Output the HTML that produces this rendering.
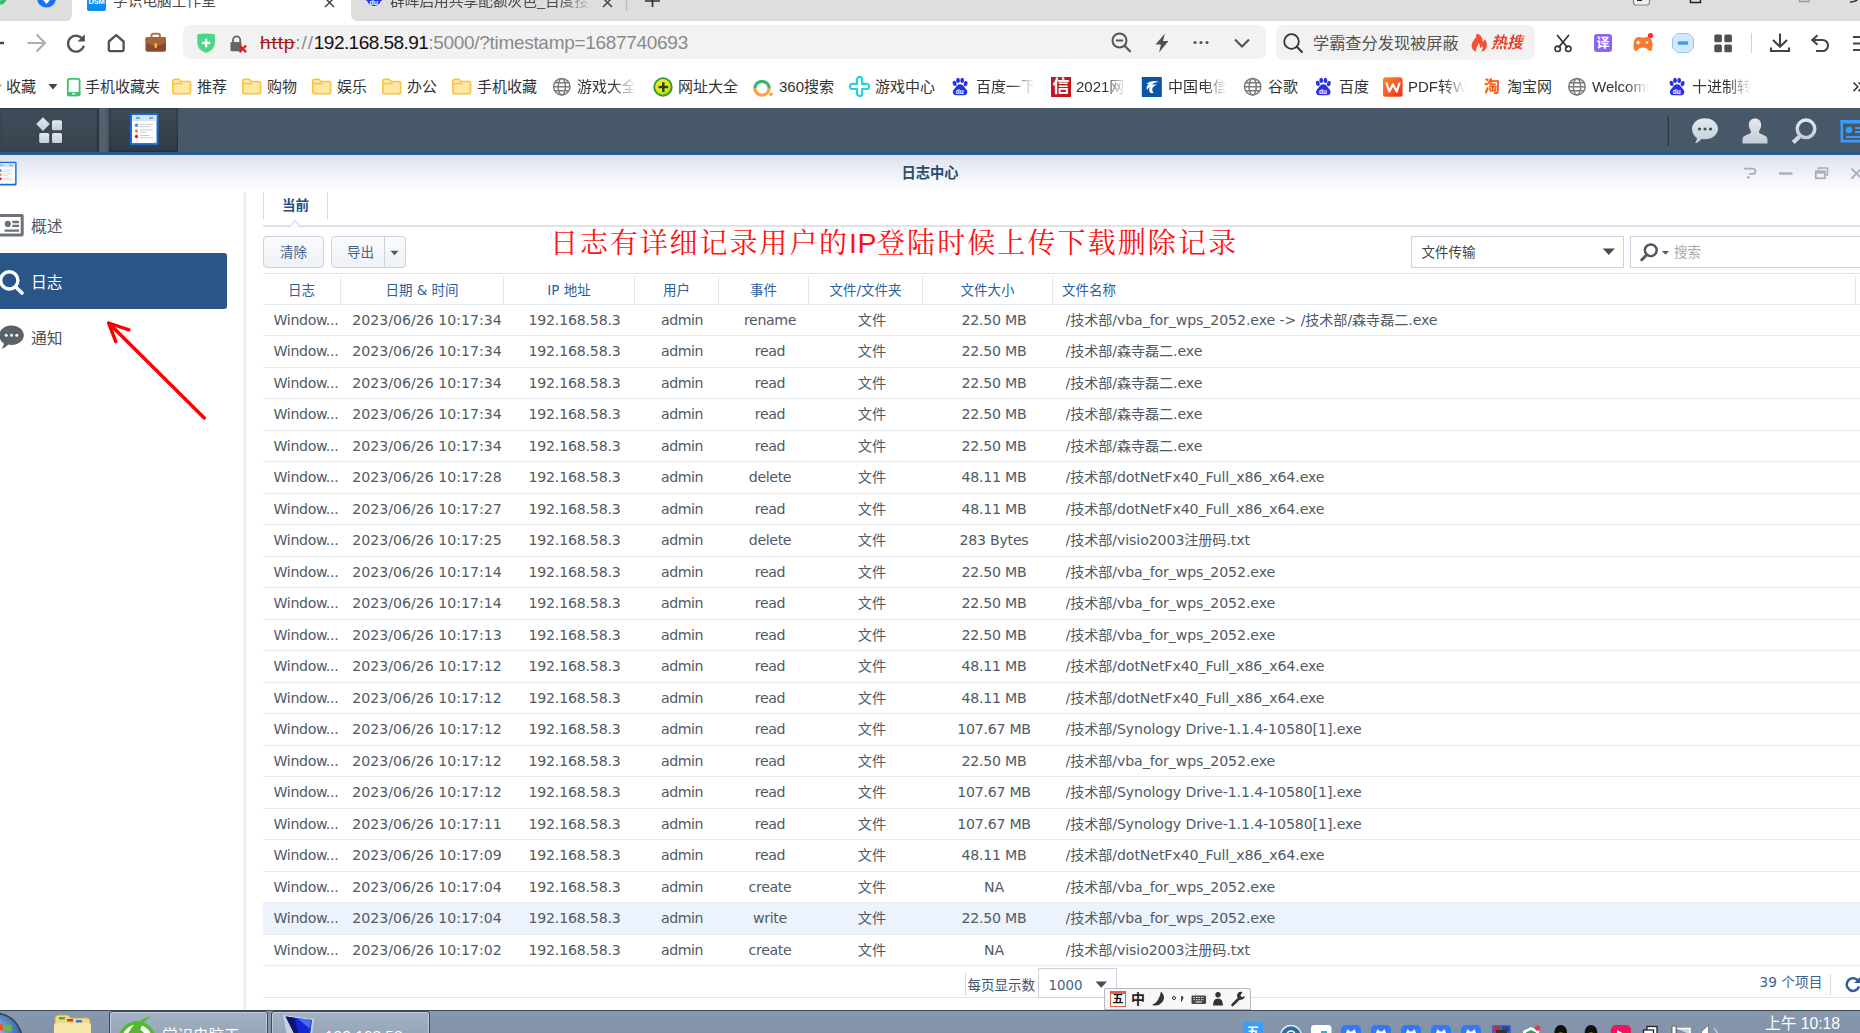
<!DOCTYPE html>
<html lang="zh-CN">
<head>
<meta charset="utf-8">
<title>日志中心</title>
<style>
*{box-sizing:border-box;margin:0;padding:0}
html,body{width:1860px;height:1033px;overflow:hidden;background:#fff}
body{position:relative;font-family:"DejaVu Sans","Noto Sans CJK SC",sans-serif;color:#505a64}
.abs{position:absolute}
svg{position:absolute;overflow:visible}
/* ---------- browser chrome ---------- */
#tabstrip{left:0;top:0;width:1860px;height:21px;background:#dedede}
.bkf{-webkit-mask-image:linear-gradient(90deg,#000 85%,transparent 100%);mask-image:linear-gradient(90deg,#000 85%,transparent 100%)}
.tab{position:absolute;top:-14px;height:35px;background:#e7e7e7;border-radius:8px 8px 0 0}
.tab.act{background:#fff}
.tabtxt{position:absolute;top:-9px;font:14.7px/20px "Liberation Sans","Noto Sans CJK SC",sans-serif;color:#4a4a4a;white-space:nowrap}
#toolbar{left:0;top:21px;width:1860px;height:44px;background:#fff}
#addr{left:183px;top:25px;width:1083px;height:35px;height:34px;background:#f2f2f2;border-radius:7px}
#url{left:260px;top:30px;font:19px/26px "Liberation Sans",sans-serif;color:#8a8a8a;white-space:nowrap;letter-spacing:-0.3px}
#url b{font-weight:normal;color:#111;letter-spacing:-.55px}
#url s{color:#a01818;letter-spacing:.9px}
#url u{text-decoration:none;letter-spacing:.9px}
#srch{left:1276px;top:25px;width:259px;height:35px;background:#f2f2f2;border-radius:7px}
#srchtxt{left:1313px;top:32px;font:16.2px/22px "Liberation Sans","Noto Sans CJK SC",sans-serif;color:#555;white-space:nowrap}
#hot{left:1491px;-webkit-mask-image:linear-gradient(90deg,#000 85%,transparent 100%);mask-image:linear-gradient(90deg,#000 85%,transparent 100%);width:35px;overflow:hidden;top:32px;font:italic bold 16px/22px "Liberation Sans","Noto Sans CJK SC",sans-serif;color:#e8432e;white-space:nowrap}
#bm{left:0;top:65px;width:1860px;height:43px;background:#fff}
.bk{position:absolute;top:75.6px;font:15px/22px "Liberation Sans","Noto Sans CJK SC",sans-serif;color:#333;white-space:nowrap;overflow:hidden}
.bk.f{-webkit-mask-image:linear-gradient(90deg,#000 60%,transparent 100%);mask-image:linear-gradient(90deg,#000 60%,transparent 100%)}
/* ---------- DSM ---------- */
#dsmbar{left:0;top:108px;width:1860px;height:44px;background:#475968}
#dsmline{left:0;top:152px;width:1860px;height:3px;background:#2a5a94}
#wtitle{left:0;top:155px;width:1860px;height:38px;background:linear-gradient(#dde3ee 0,#e6eaf3 25%,#f7f8fb 70%,#fff 100%)}
#wtxt{left:0;top:163px;width:1860px;text-align:center;font:bold 14.3px/20px "DejaVu Sans","Noto Sans CJK SC",sans-serif;color:#2c4a6e}
#side{left:0;top:192px;width:244px;height:818px;background:#fff}
#sidediv{left:242.5px;top:192px;width:3px;height:818px;background:linear-gradient(90deg,#fff,#e3e5e8 60%,#f4f5f6)}
.nav{position:absolute;left:0;width:227px;height:56px;font:15.8px/59px "DejaVu Sans","Noto Sans CJK SC",sans-serif;color:#4a5560;padding-left:31px}
.nav.sel{background:#2a5588;color:#fff;border-radius:0 3px 3px 0}
/* tabs */
#tab1{left:263px;top:192px;width:65px;height:27px;border-left:1px solid #d5dbe3;border-right:1px solid #d5dbe3;text-align:center;font:bold 13.5px/27px "DejaVu Sans","Noto Sans CJK SC",sans-serif;color:#27507f}
#tabline{left:263px;top:225px;width:1597px;height:2px;background:#e1e3e6}
/* toolbar */
.btn{position:absolute;top:236px;height:32px;border:1px solid #c9d2de;border-radius:4px;background:linear-gradient(#fafbfd,#eef1f6);font:13.5px/30px "DejaVu Sans","Noto Sans CJK SC",sans-serif;color:#3f6290;text-align:center}
#note{left:550px;top:223.3px;font:28px/40px "Liberation Serif","Noto Serif CJK SC",serif;color:#f11;white-space:nowrap;letter-spacing:1.9px}
#note i{font:normal 28.5px/40px "Liberation Sans",sans-serif;letter-spacing:.5px}
#note em{font-style:normal;letter-spacing:2.1px}
.field{position:absolute;top:236px;height:32px;border:1px solid #c9d2de;background:#fff;font:13.5px/31.5px "DejaVu Sans","Noto Sans CJK SC",sans-serif;color:#444}
/* grid */
#ghead{left:263px;top:273px;width:1597px;height:32px;border-top:1px solid #dfe4ea;border-bottom:1px solid #e3e8ee;background:#fff}
.h{position:absolute;top:2px;height:29px;font:13.5px/29px "DejaVu Sans","Noto Sans CJK SC",sans-serif;color:#2b609d;text-align:center;border-right:1px solid #e3e8ee;white-space:nowrap}
#gbody{left:263px;top:304.5px;width:1597px}
.row{position:relative;height:31.5px;width:1597px;border-bottom:1px solid #e9edf2;font:14.15px/31.5px "DejaVu Sans","Noto Sans CJK SC",sans-serif;color:#505a64;white-space:nowrap}
.row.hov{background:#edf3fd}
.c{position:absolute;top:0;text-align:center;overflow:hidden;height:30px}
.c1{left:0;width:77px;text-align:left;padding-left:10.5px;letter-spacing:-.35px}
.c2{left:82px;width:164px}
.c3{left:246.5px;width:130px;letter-spacing:-.2px}
.c4{left:377px;width:84px;letter-spacing:-.45px}
.c5{left:455px;width:104px;letter-spacing:-.35px}
.c6{left:559px;width:100px}
.c7{left:666px;width:130px;letter-spacing:-.25px}
.c8{left:802.5px;width:780px;text-align:left;letter-spacing:-.1px}
#gfoot{left:263px;top:997px;width:1597px;height:1px;background:#dfe4ea}
.ft{position:absolute;font:13.5px/20px "DejaVu Sans","Noto Sans CJK SC",sans-serif;color:#3f6290;white-space:nowrap}
/* win taskbar */
#wtask{left:0;top:1009.5px;width:1860px;height:24px;background:linear-gradient(#8797ae,#8192a9);border-top:1.5px solid #3f4a58}
.tb{position:absolute;top:1010.5px;height:30px;border:1px solid #3f4a58;border-radius:3px;background:linear-gradient(#a3b1c3,#93a3b7);box-shadow:inset 0 0 0 1px rgba(255,255,255,.35)}
.tbt{position:absolute;top:1026px;font:15.5px/20px "Liberation Sans","Noto Sans CJK SC",sans-serif;color:#fff;white-space:nowrap}
#clock{left:1765px;top:1014px;font:15.7px/20px "Liberation Sans","Noto Sans CJK SC",sans-serif;color:#fff;white-space:nowrap}
#ime{left:1104px;top:988px;width:147px;height:22px;background:#f7f7f7;border:1px solid #b5b8bd;border-radius:2px 2px 0 0}
</style>
</head>
<body>
<!-- browser tab strip -->
<div id="tabstrip" class="abs"></div>
<div class="tab act" style="left:72px;width:279px"></div>
<div class="abs" style="left:62px;top:10px;width:10px;height:11px;background:#fff"></div>
<div class="abs" style="left:62px;top:0;width:10px;height:21px;background:#dedede;border-radius:0 0 6px 0"></div>
<div class="abs" style="left:351px;top:10px;width:10px;height:11px;background:#fff"></div>
<div class="abs" style="left:351px;top:0;width:10px;height:21px;background:#dedede;border-radius:0 0 0 6px"></div>
<div class="tabtxt" style="left:113px">学识电脑工作室</div>
<div class="tabtxt bkf" style="left:390px;width:202px;overflow:hidden">群晖启用共享配额灰色_百度搜</div>
<div id="toolbar" class="abs"></div>
<div id="addr" class="abs"></div>
<div id="url" class="abs"><s>http</s><u>://</u><b>192.168.58.91</b>:5000/?timestamp=1687740693</div>
<div id="srch" class="abs"></div>
<div id="srchtxt" class="abs">学霸查分发现被屏蔽</div>
<div id="hot" class="abs">热搜</div>
<div id="bm" class="abs"></div>
<div class="bk" style="left:6px">收藏</div>
<div class="bk" style="left:85px">手机收藏夹</div>
<div class="bk" style="left:197px">推荐</div>
<div class="bk" style="left:267px">购物</div>
<div class="bk" style="left:337px">娱乐</div>
<div class="bk" style="left:407px">办公</div>
<div class="bk" style="left:477px">手机收藏</div>
<div class="bk f" style="left:577px;width:59px">游戏大全</div>
<div class="bk" style="left:678px">网址大全</div>
<div class="bk" style="left:779px">360搜索</div>
<div class="bk" style="left:875px">游戏中心</div>
<div class="bk f" style="left:976px;width:58px">百度一下</div>
<div class="bk f" style="left:1076px;width:50px">2021网</div>
<div class="bk f" style="left:1168px;width:59px">中国电信</div>
<div class="bk" style="left:1268px">谷歌</div>
<div class="bk" style="left:1339px">百度</div>
<div class="bk f" style="left:1408px;width:58px">PDF转W</div>
<div class="bk" style="left:1507px">淘宝网</div>
<div class="bk f" style="left:1592px;width:57px">Welcome</div>
<div class="bk f" style="left:1692px;width:59px">十进制转</div>
<div class="bk" style="left:1484px;top:76px;color:#ff5a00;font-weight:bold;font-size:16px">淘</div>
<div class="abs" style="left:1594px;top:34px;width:18px;height:18px;border-radius:3px;background:#8f63f2;color:#fff;font:bold 13px/18px 'Liberation Sans','Noto Sans CJK SC',sans-serif;text-align:center">译</div>
<div class="abs" style="left:1051px;top:77px;width:20px;height:20px;background:#c3161c;color:#fff;font:bold 17px/19px 'Liberation Sans','Noto Sans CJK SC',sans-serif;text-align:center">信</div>
<div class="abs" style="left:87px;top:-8.500px;width:19px;height:19px;border-radius:2px;background:#0a8cf0;color:#fff;font:bold 7.5px/19px 'Liberation Sans',sans-serif;text-align:center;letter-spacing:-.2px">DSM</div>
<svg width="1860" height="108" viewBox="0 0 1860 108" style="left:0;top:0">
<defs>
<g id="folder"><path d="M1 3.2q0-2 2-2h4.2l2 2.3h7.6q2 0 2 2v8.3q0 2-2 2H3q-2 0-2-2z" fill="#fde7a2" stroke="#f7c33f" stroke-width="1.6"/><path d="M1.5 5.6h9.5" stroke="#f7c33f" stroke-width="1.4"/></g>
<g id="globe" fill="none" stroke="#7a7a7a" stroke-width="1.5"><circle r="8.2"/><ellipse rx="3.6" ry="8.2"/><path d="M-8.2 0h16.4M-7.2-4h14.4M-7.2 4h14.4"/></g>
<g id="paw" fill="#2932e1"><ellipse cx="-5.2" cy="-3.6" rx="1.9" ry="2.7" transform="rotate(-18 -5.2 -3.6)"/><ellipse cx="-1.8" cy="-6.6" rx="1.9" ry="2.6"/><ellipse cx="2.4" cy="-6.6" rx="1.9" ry="2.6"/><ellipse cx="5.8" cy="-3.4" rx="1.9" ry="2.7" transform="rotate(18 5.8 -3.4)"/><path d="M0.3-2.8c2.6 0 3.6 2.2 5.2 4 2.2 2.3 2.6 4 1.4 5.8-1.3 1.8-3.4 1.2-6.6 1.2s-5.3.6-6.6-1.2c-1.2-1.8-.8-3.5 1.4-5.800 1.600-1.8 2.600-4 5.200-4z"/></g>
</defs>
<!-- tab strip bits -->
<path d="M0 3a7 7 0 0 0 5-6" fill="none" stroke="#28c06e" stroke-width="4"/>
<circle cx="46.500" cy="-2" r="9.500" fill="#1f6ff2"/><path d="M43 0l3.500 4 3.500-4z" fill="#fff"/>
<path d="M325 -2l9 9m0-9l-9 9" stroke="#444" stroke-width="1.500"/>
<circle cx="374" cy="-1" r="7" fill="#2932e1"/><circle cx="368" cy="-2" r="3" fill="#2932e1"/><circle cx="380" cy="-2" r="3" fill="#2932e1"/><text x="369.500" y="5" font-family="Liberation Sans" font-weight="bold" font-size="7" fill="#fff">du</text>
<path d="M603 -2l9 9m0-9l-9 9" stroke="#444" stroke-width="1.500"/>
<path d="M626.500 0v11" stroke="#bbb" stroke-width="1.500"/>
<path d="M652.500 -6v13M645 1h15" stroke="#333" stroke-width="1.700"/>
<rect x="1633.500" y="-6" width="16" height="11" rx="2.500" fill="#eee" stroke="#888" stroke-width="1.200"/><rect x="1637" y="-3" width="5" height="4" fill="#222"/>
<path d="M1690.500 -2v4.500h10v-4.500" fill="none" stroke="#222" stroke-width="1.500"/>
<path d="M1799.500 -2v3.500h9.500v-3.500" fill="none" stroke="#999" stroke-width="1.300"/>
<path d="M1850 2q6 0 9-4" fill="none" stroke="#333" stroke-width="1.500"/>
<!-- toolbar left -->
<path d="M-3 43h7" stroke="#444" stroke-width="2.400"/>
<path d="M27.500 43h17M36.500 34.500l8.500 8.500-8.500 8.500" fill="none" stroke="#adadad" stroke-width="2.100"/>
<path d="M83.300 40.200A8 8 0 1 0 83.800 45.800" fill="none" stroke="#505050" stroke-width="2.300"/><path d="M84.800 34.200v7.300h-7.300z" fill="#505050"/>
<path d="M108.800 41.500l7.400-6.300 7.400 6.300v8q0 1.600-1.600 1.600h-11.600q-1.600 0-1.600-1.600z" fill="none" stroke="#505050" stroke-width="2.300" stroke-linejoin="round"/>
<!-- briefcase -->
<path d="M151.500 37.500v-2q0-1.700 1.700-1.700h5q1.700 0 1.700 1.700v2" fill="none" stroke="#b8763f" stroke-width="2"/>
<rect x="145.500" y="37" width="20.500" height="14.800" rx="2" fill="#8a4b2a"/><path d="M145.500 39q0-2 2-2h16.500q2 0 2 2v3.500q-5 3-10.300 3t-10.200-3z" fill="#a9633a"/>
<rect x="154.600" y="43.200" width="2.300" height="4.600" rx=".6" fill="#f3c64a"/>
<!-- shield -->
<path d="M197.300 34.200q8.800-1.300 17.600 0v8.600q0 7-8.800 10.300-8.800-3.300-8.800-10.300z" fill="#4ad684"/><path d="M206.100 38.800v8.400M201.900 43h8.400" stroke="#fff" stroke-width="2.300"/>
<!-- lock -->
<path d="M233 42.500v-2.500a3.600 3.600 0 0 1 7.200 0v2.500" fill="none" stroke="#666" stroke-width="1.800"/><rect x="230.500" y="42" width="11" height="9.300" rx="1.200" fill="#666"/>
<path d="M239.500 45.500l6.600 6.600m0-6.600l-6.600 6.600" stroke="#e21b1b" stroke-width="2.200"/>
<!-- address bar right icons -->
<circle cx="1119.500" cy="40.500" r="7" fill="none" stroke="#555" stroke-width="2"/><path d="M1116 40.500h7" stroke="#555" stroke-width="2"/><path d="M1124.500 45.800l5.500 5.500" stroke="#555" stroke-width="2.300" stroke-linecap="round"/>
<path d="M1165 33.500l-9.500 11h5.500l-2 8 9.500-11.500h-5.500z" fill="#505050"/>
<circle cx="1195" cy="42.500" r="1.600" fill="#555"/><circle cx="1201" cy="42.500" r="1.600" fill="#555"/><circle cx="1207" cy="42.500" r="1.600" fill="#555"/>
<path d="M1235 39.500l7 7 7-7" fill="none" stroke="#505050" stroke-width="2.100"/>
<circle cx="1291.500" cy="41.500" r="7.300" fill="none" stroke="#333" stroke-width="1.800"/><path d="M1297 47l5 5" stroke="#333" stroke-width="2" stroke-linecap="round"/>
<!-- fire -->
<path d="M1478.500 34q5 3.500 4 8 1.700-1 2.300-3 3 4 1.800 8.200-1.200 4-6 4.600 3-2.200 1.700-5.800-1 2-2.300 2.200.7-3.300-1.800-5.800.3 3-1.500 5.200-1.300 2-.3 4.200-4.500-1.200-4.800-5.800-.2-3.300 2.400-6 2.800-2.800 2.500-6z" fill="#f7503a"/>
<!-- right icons -->
<path d="M1557.500 35.500l9.500 11.500M1568.500 35.500l-9.500 11.500" stroke="#333" stroke-width="1.700" stroke-linecap="round"/><circle cx="1557.700" cy="48.800" r="2.700" fill="none" stroke="#333" stroke-width="1.600"/><circle cx="1568.300" cy="48.800" r="2.700" fill="none" stroke="#333" stroke-width="1.600"/>
<path d="M1634 49.500q-1.500-6.500 1-10.500 1.500-2.500 4.500-2 1.500.5 3.500.5t3.500-.5q3-.5 4.500 2 2.500 4 1 10.500-.5 1.800-2 1.500-1.800-.5-3.500-2.800-1.700-.7-3.500-.7t-3.500.7q-1.700 2.300-3.500 2.800-1.500.3-2-1.500z" fill="#f97a2a"/>
<path d="M1638.300 40.500v4M1636.300 42.500h4" stroke="#fff" stroke-width="1.300"/><circle cx="1647" cy="42.500" r="1.300" fill="#fff"/>
<circle cx="1650.500" cy="35.600" r="2.700" fill="#f5333f"/>
<path d="M1677.300 33.500h11.400l4.800 4.800v9.400l-4.800 4.800h-11.400l-4.800-4.800v-9.400z" fill="#d3e8fc" stroke="#93c6f6" stroke-width="1" stroke-linejoin="round"/><rect x="1677.800" y="41.300" width="10.400" height="3.400" rx="1.200" fill="#3f9bf4"/>
<rect x="1714.300" y="34.600" width="7.600" height="7.600" rx="1.500" fill="#505050"/><rect x="1724.300" y="34.600" width="7.600" height="7.600" rx="1.500" fill="#505050"/><rect x="1714.300" y="44.600" width="7.600" height="7.600" rx="1.500" fill="#505050"/><rect x="1724.300" y="44.600" width="7.600" height="7.600" rx="1.500" fill="#505050"/>
<path d="M1751.500 33v20" stroke="#d2d2d2" stroke-width="1"/>
<path d="M1780 33.500v12.500M1773 40l7 6.800 7-6.800M1771 47.500v3.500h18v-3.500" fill="none" stroke="#444" stroke-width="2.100"/>
<path d="M1817.500 35.300l-5.200 4.700 5.200 4.700M1813 40h9.500a5.500 5.500 0 0 1 0 11h-6.500" fill="none" stroke="#444" stroke-width="2.100"/>
<path d="M1853 37h8M1853 43.500h8M1853 50h8" stroke="#444" stroke-width="2.100"/>
<!-- bookmarks -->
<path d="M-1 85.500l2.500 0" stroke="#f5a623" stroke-width="2"/>
<path d="M48.500 84h9l-4.500 5.600z" fill="#444"/>
<rect x="67.800" y="78.800" width="11.800" height="16.600" rx="1.800" fill="#fff" stroke="#3fc06b" stroke-width="1.800"/><path d="M67 92h13.400v2.400q0 1.800-1.800 1.800h-9.800q-1.800 0-1.800-1.800z" fill="#3fc06b"/><rect x="72" y="93.200" width="3.400" height="1.200" fill="#fff"/>
<use href="#folder" x="171.800" y="78"/><use href="#folder" x="241.800" y="78"/><use href="#folder" x="311.800" y="78"/><use href="#folder" x="381.800" y="78"/><use href="#folder" x="451.800" y="78"/>
<use href="#globe" x="561.800" y="86.700"/><use href="#globe" x="1252.700" y="86.700"/><use href="#globe" x="1577" y="86.700"/>
<use href="#paw" x="959.800" y="87"/><use href="#paw" x="1323" y="87"/><use href="#paw" x="1676.800" y="87"/>
<text x="955.800" y="94.300" font-family="Liberation Sans" font-weight="bold" font-size="6.500" fill="#fff">du</text><text x="1319" y="94.300" font-family="Liberation Sans" font-weight="bold" font-size="6.500" fill="#fff">du</text><text x="1672.800" y="94.300" font-family="Liberation Sans" font-weight="bold" font-size="6.500" fill="#fff">du</text>
<!-- 网址大全 -->
<defs><radialGradient id="yg" cx=".45" cy=".4" r=".6"><stop offset="0" stop-color="#fdf53c"/><stop offset=".75" stop-color="#e6e01c"/><stop offset="1" stop-color="#8fc21f"/></radialGradient></defs>
<circle cx="663" cy="87" r="9.700" fill="#2f9e2c"/><circle cx="663" cy="87" r="7.900" fill="url(#yg)"/>
<path d="M663.300 82.300v9.600M658.500 87.100h9.600" stroke="#1c4a14" stroke-width="2.500"/>
<!-- 360 -->
<path d="M754.800 88.500a7.200 7.200 0 0 1 14.400 0" fill="none" stroke="#2fb66c" stroke-width="3.200"/><path d="M754.800 88a7.200 7.200 0 0 0 14.400 0" fill="none" stroke="#f9a245" stroke-width="3.200"/><circle cx="771" cy="94.300" r="1.700" fill="#f9a245"/>
<!-- game center -->
<path d="M857 79.500a2.600 2.600 0 0 1 5.200 0v4.300h4.300a2.600 2.600 0 0 1 0 5.200h-4.300v4.500a2.600 2.600 0 0 1-5.200 0v-4.500h-4.500a2.600 2.600 0 0 1 0-5.200h4.500z" fill="none" stroke="#2ccfdd" stroke-width="2.200"/>
<!-- telecom -->
<rect x="1141.800" y="77" width="20" height="20" fill="#0a56a5"/><path d="M1146 84q6-5 13-2-5 0-7 2.500h5q-3.500 1-4.500 3.500-1 3 1.500 5h-3.500q-2.500-2.500-.5-6-2 .8-3 3-1.500-3.500 2-6z" fill="#fff"/>
<!-- wps -->
<defs><linearGradient id="wg" x1="0" y1="0" x2="1" y2="1"><stop offset="0" stop-color="#ff8a2e"/><stop offset="1" stop-color="#f32a1c"/></linearGradient></defs>
<rect x="1383" y="77.200" width="19.600" height="19.600" rx="2.500" fill="url(#wg)"/><path d="M1386.300 82.500l3 9 3.700-7 3.700 7 3-9" fill="none" stroke="#fff" stroke-width="2.200" stroke-linejoin="round"/>
<path d="M1853.500 82.500l4.300 4.300-4.300 4.300M1858.500 82.500l4.300 4.300-4.300 4.300" fill="none" stroke="#333" stroke-width="1.500"/>
</svg>

<!-- DSM desktop -->
<div id="dsmbar" class="abs"></div>
<div id="dsmline" class="abs"></div>
<div id="wtitle" class="abs"></div>
<div id="wtxt" class="abs">日志中心</div>
<div class="abs" style="left:0;top:108px;width:99px;height:44px;background:linear-gradient(#3f4d5a,#37444f);box-shadow:inset -2px 0 2px rgba(0,0,0,.25),inset 0 1px 2px rgba(0,0,0,.2)"></div>
<div class="abs" style="left:99px;top:108px;width:10px;height:44px;background:linear-gradient(90deg,#4e5e6c,#55636f 50%,#465562)"></div>
<div class="abs" style="left:109px;top:108px;width:69px;height:44px;background:linear-gradient(#3d4b57,#2f3b46);box-shadow:inset 0 0 3px rgba(0,0,0,.45)"></div>
<svg width="1860" height="90" viewBox="0 108 1860 90" style="left:0;top:108px">
<defs>
<linearGradient id="ig" x1="0" y1="0" x2="0" y2="1"><stop offset="0" stop-color="#e2e8ee"/><stop offset="1" stop-color="#c5ced7"/></linearGradient>
<g id="logic">
<rect x="0" y="0" width="28.500" height="32" rx="1.500" fill="#1a6ad3"/>
<rect x="2" y="1.800" width="24.500" height="28" fill="#fff"/>
<rect x="2" y="1.800" width="24.500" height="5.800" fill="#cfe3fb"/>
<path d="M6 4.700h4M19 4.700h4" stroke="#6d8fb8" stroke-width="1.300"/>
<circle cx="6.500" cy="12" r="1.700" fill="#2e8ff0"/><circle cx="6.500" cy="17.600" r="1.700" fill="#f5891f"/><circle cx="6.500" cy="23.200" r="1.700" fill="#d81e26"/>
<path d="M10 11h13M10 13.300h10M10 16.600h13M10 18.900h7M10 22.200h10M10 24.500h13" stroke="#c9ccd1" stroke-width="1"/>
<path d="M24 30l2.500-2.500v2.500z" fill="#9db8d8"/>
</g>
</defs>
<!-- main menu -->
<path d="M43 117.300l6.800 6.800-6.800 6.800-6.800-6.800z" fill="url(#ig)"/>
<rect x="52" y="120.300" width="10" height="10" rx="1.500" fill="url(#ig)"/><rect x="39.200" y="133" width="10" height="10" rx="1.500" fill="url(#ig)"/><rect x="52" y="133" width="10" height="10" rx="1.500" fill="url(#ig)"/>
<use href="#logic" x="130" y="113.300"/>
<g transform="translate(-4.200 161.700) scale(.73 .74)"><use href="#logic"/></g>
<!-- right icons -->
<path d="M1668.500 116v30" stroke="#2b3641" stroke-width="1.500"/><path d="M1670 116v30" stroke="#526371" stroke-width="1"/>
<path d="M1705 118.300c7.200 0 13 4.700 13 10.500s-5.800 10.500-13 10.500c-1.300 0-2.500-.15-3.700-.4-1.300 1.900-3.300 3.600-6.300 4.400 1.200-1.500 1.900-3.400 1.900-5.300-3-1.900-4.900-5.400-4.900-9.200 0-5.800 5.800-10.500 13-10.500z" fill="url(#ig)"/>
<circle cx="1699.500" cy="129" r="1.600" fill="#3f4e5b"/><circle cx="1705" cy="129" r="1.600" fill="#3f4e5b"/><circle cx="1710.500" cy="129" r="1.600" fill="#3f4e5b"/>
<path d="M1755 118.500c3.800 0 6.200 2.600 6.200 6.300 0 2.500-.9 4.300-1.800 5.600-.5.700-.6 2.400.3 2.900 2.400 1.200 6.500 2.500 7.300 4.200.6 1.300.5 4 .5 6h-25c0-2-.1-4.700.5-6 .8-1.700 4.900-3 7.300-4.200.9-.5.800-2.200.3-2.900-.9-1.300-1.800-3.100-1.800-5.600 0-3.700 2.400-6.300 6.200-6.300z" fill="url(#ig)"/>
<circle cx="1806" cy="128.800" r="8.800" fill="none" stroke="url(#ig)" stroke-width="3.400"/><path d="M1799.500 136.500l-6.300 6" stroke="#d0d8e0" stroke-width="4.200"/>
<rect x="1841.800" y="121.200" width="30" height="20" fill="none" stroke="#3a9bf8" stroke-width="2.600"/><rect x="1840.500" y="120" width="30" height="3.500" fill="#3a9bf8"/>
<circle cx="1849" cy="130" r="3.300" fill="#3a9bf8"/><path d="M1855 128h8M1855 132h8M1846 137h17" stroke="#3a9bf8" stroke-width="1.800"/>
<!-- window ctrl -->
<path d="M1744 168.700h8.500q3 0 3 2.600t-3 2.600h-3.500" fill="none" stroke="#a9aeb8" stroke-width="1.800"/><rect x="1747" y="176.300" width="2.600" height="2.200" fill="#a9aeb8"/>
<path d="M1779 173.500h13.500" stroke="#a9aeb8" stroke-width="2.400"/>
<path d="M1818.500 170v-2h9v7h-1.500" fill="none" stroke="#a9aeb8" stroke-width="1.600"/><rect x="1815.800" y="171.300" width="9" height="7" fill="none" stroke="#a9aeb8" stroke-width="1.800"/><path d="M1815.800 172.300h9" stroke="#a9aeb8" stroke-width="2.600"/>
<path d="M1851.500 168.500l10 10M1861.500 168.500l-10 10" stroke="#a9aeb8" stroke-width="1.800"/>
</svg>

<div id="side" class="abs"></div>
<div id="sidediv" class="abs"></div>
<div class="nav" style="top:197px">概述</div>
<div class="nav sel" style="top:253px">日志</div>
<div class="nav" style="top:309px">通知</div>
<svg width="250" height="240" viewBox="0 190 250 240" style="left:0;top:190px">
<rect x="-3" y="215.500" width="25.200" height="19.600" rx=".5" fill="none" stroke="#6d727a" stroke-width="3"/>
<circle cx="7.800" cy="223.900" r="3.100" fill="#6d727a"/><path d="M12.300 222h6.700M12.300 225.800h6.700M4.500 230.600h14.500" stroke="#6d727a" stroke-width="2.300"/>
<circle cx="9.300" cy="280.400" r="8.600" fill="none" stroke="#fff" stroke-width="3.400"/><path d="M16 287.200l6 5.800" stroke="#fff" stroke-width="3.600" stroke-linecap="round"/>
<path d="M11.500 325.500c6.800 0 12.300 4.300 12.300 9.700s-5.500 9.700-12.300 9.700c-1.200 0-2.300-.1-3.400-.4-1.200 1.800-3.600 3.500-6.600 4.200 1.300-1.500 2.300-3.300 2.300-5.100-2.800-1.800-4.600-5-4.600-8.400 0-5.400 5.500-9.700 12.300-9.700z" fill="#59616b"/>
<circle cx="6.200" cy="335.300" r="1.500" fill="#fff"/><circle cx="11.500" cy="335.300" r="1.500" fill="#fff"/><circle cx="16.800" cy="335.300" r="1.500" fill="#fff"/>
<path d="M204.300 418L108.600 323M129 329.800L108.600 323L115.800 341.700" fill="none" stroke="#fb0007" stroke-width="3.400" stroke-linecap="round" stroke-linejoin="round"/>
</svg>

<div id="tab1" class="abs">当前</div>
<div id="tabline" class="abs"></div>
<svg width="20" height="8" viewBox="0 0 20 8" style="left:285px;top:219px"><path d="M0 7.500h4.500l5.500-5.500 5.500 5.500h4.500" fill="#fff" stroke="#dfe1e4" stroke-width="1.600"/></svg>
<div class="btn" style="left:263px;width:61px">清除</div>
<div class="btn" style="left:331px;width:75px;text-align:left;padding-left:15px">导出</div>
<div class="abs" style="left:384px;top:237px;width:1px;height:30px;background:#c9d2de"></div>
<svg width="10" height="6" viewBox="0 0 10 6" style="left:390px;top:250px"><path d="M.5 .8h8l-4 4.400z" fill="#4a5a6a"/></svg>
<div id="note" class="abs">日志有详细记录用户的<i>IP</i><em>登陆时候上传下载删除记录</em></div>
<div class="field" style="left:1411px;width:213px;padding-left:9.500px">文件传输</div>
<svg width="14" height="8" viewBox="0 0 14 8" style="left:1602px;top:248px"><path d="M.8 .5h12l-6 6.500z" fill="#444c55"/></svg>
<div class="field" style="left:1630px;width:240px;padding-left:43px;color:#a3a8ae">搜索</div>
<svg width="40" height="24" viewBox="0 0 40 24" style="left:1638px;top:240px"><circle cx="12.800" cy="10.300" r="5.900" fill="none" stroke="#4e5965" stroke-width="2.500"/><path d="M8.800 14.800l-5 5" stroke="#4e5965" stroke-width="3" stroke-linecap="round"/><path d="M24 11h7l-3.500 3.800z" fill="#4e5965"/></svg>
<div id="ghead" class="abs">
<div class="h" style="left:0;width:78px">日志</div>
<div class="h" style="left:78px;width:163px">日期 &amp; 时间</div>
<div class="h" style="left:241px;width:131px">IP 地址</div>
<div class="h" style="left:372px;width:84px">用户</div>
<div class="h" style="left:456px;width:90px">事件</div>
<div class="h" style="left:546px;width:114px">文件/文件夹</div>
<div class="h" style="left:660px;width:130px">文件大小</div>
<div class="h" style="left:790px;width:803px;text-align:left;padding-left:9px">文件名称</div>
</div>

<div id="gbody" class="abs">
<div class="row"><span class="c c1">Window...</span><span class="c c2">2023/06/26 10:17:34</span><span class="c c3">192.168.58.3</span><span class="c c4">admin</span><span class="c c5">rename</span><span class="c c6">文件</span><span class="c c7">22.50 MB</span><span class="c c8">/技术部/vba_for_wps_2052.exe -&gt; /技术部/森寺磊二.exe</span></div>
<div class="row"><span class="c c1">Window...</span><span class="c c2">2023/06/26 10:17:34</span><span class="c c3">192.168.58.3</span><span class="c c4">admin</span><span class="c c5">read</span><span class="c c6">文件</span><span class="c c7">22.50 MB</span><span class="c c8">/技术部/森寺磊二.exe</span></div>
<div class="row"><span class="c c1">Window...</span><span class="c c2">2023/06/26 10:17:34</span><span class="c c3">192.168.58.3</span><span class="c c4">admin</span><span class="c c5">read</span><span class="c c6">文件</span><span class="c c7">22.50 MB</span><span class="c c8">/技术部/森寺磊二.exe</span></div>
<div class="row"><span class="c c1">Window...</span><span class="c c2">2023/06/26 10:17:34</span><span class="c c3">192.168.58.3</span><span class="c c4">admin</span><span class="c c5">read</span><span class="c c6">文件</span><span class="c c7">22.50 MB</span><span class="c c8">/技术部/森寺磊二.exe</span></div>
<div class="row"><span class="c c1">Window...</span><span class="c c2">2023/06/26 10:17:34</span><span class="c c3">192.168.58.3</span><span class="c c4">admin</span><span class="c c5">read</span><span class="c c6">文件</span><span class="c c7">22.50 MB</span><span class="c c8">/技术部/森寺磊二.exe</span></div>
<div class="row"><span class="c c1">Window...</span><span class="c c2">2023/06/26 10:17:28</span><span class="c c3">192.168.58.3</span><span class="c c4">admin</span><span class="c c5">delete</span><span class="c c6">文件</span><span class="c c7">48.11 MB</span><span class="c c8">/技术部/dotNetFx40_Full_x86_x64.exe</span></div>
<div class="row"><span class="c c1">Window...</span><span class="c c2">2023/06/26 10:17:27</span><span class="c c3">192.168.58.3</span><span class="c c4">admin</span><span class="c c5">read</span><span class="c c6">文件</span><span class="c c7">48.11 MB</span><span class="c c8">/技术部/dotNetFx40_Full_x86_x64.exe</span></div>
<div class="row"><span class="c c1">Window...</span><span class="c c2">2023/06/26 10:17:25</span><span class="c c3">192.168.58.3</span><span class="c c4">admin</span><span class="c c5">delete</span><span class="c c6">文件</span><span class="c c7">283 Bytes</span><span class="c c8">/技术部/visio2003注册码.txt</span></div>
<div class="row"><span class="c c1">Window...</span><span class="c c2">2023/06/26 10:17:14</span><span class="c c3">192.168.58.3</span><span class="c c4">admin</span><span class="c c5">read</span><span class="c c6">文件</span><span class="c c7">22.50 MB</span><span class="c c8">/技术部/vba_for_wps_2052.exe</span></div>
<div class="row"><span class="c c1">Window...</span><span class="c c2">2023/06/26 10:17:14</span><span class="c c3">192.168.58.3</span><span class="c c4">admin</span><span class="c c5">read</span><span class="c c6">文件</span><span class="c c7">22.50 MB</span><span class="c c8">/技术部/vba_for_wps_2052.exe</span></div>
<div class="row"><span class="c c1">Window...</span><span class="c c2">2023/06/26 10:17:13</span><span class="c c3">192.168.58.3</span><span class="c c4">admin</span><span class="c c5">read</span><span class="c c6">文件</span><span class="c c7">22.50 MB</span><span class="c c8">/技术部/vba_for_wps_2052.exe</span></div>
<div class="row"><span class="c c1">Window...</span><span class="c c2">2023/06/26 10:17:12</span><span class="c c3">192.168.58.3</span><span class="c c4">admin</span><span class="c c5">read</span><span class="c c6">文件</span><span class="c c7">48.11 MB</span><span class="c c8">/技术部/dotNetFx40_Full_x86_x64.exe</span></div>
<div class="row"><span class="c c1">Window...</span><span class="c c2">2023/06/26 10:17:12</span><span class="c c3">192.168.58.3</span><span class="c c4">admin</span><span class="c c5">read</span><span class="c c6">文件</span><span class="c c7">48.11 MB</span><span class="c c8">/技术部/dotNetFx40_Full_x86_x64.exe</span></div>
<div class="row"><span class="c c1">Window...</span><span class="c c2">2023/06/26 10:17:12</span><span class="c c3">192.168.58.3</span><span class="c c4">admin</span><span class="c c5">read</span><span class="c c6">文件</span><span class="c c7">107.67 MB</span><span class="c c8">/技术部/Synology Drive-1.1.4-10580[1].exe</span></div>
<div class="row"><span class="c c1">Window...</span><span class="c c2">2023/06/26 10:17:12</span><span class="c c3">192.168.58.3</span><span class="c c4">admin</span><span class="c c5">read</span><span class="c c6">文件</span><span class="c c7">22.50 MB</span><span class="c c8">/技术部/vba_for_wps_2052.exe</span></div>
<div class="row"><span class="c c1">Window...</span><span class="c c2">2023/06/26 10:17:12</span><span class="c c3">192.168.58.3</span><span class="c c4">admin</span><span class="c c5">read</span><span class="c c6">文件</span><span class="c c7">107.67 MB</span><span class="c c8">/技术部/Synology Drive-1.1.4-10580[1].exe</span></div>
<div class="row"><span class="c c1">Window...</span><span class="c c2">2023/06/26 10:17:11</span><span class="c c3">192.168.58.3</span><span class="c c4">admin</span><span class="c c5">read</span><span class="c c6">文件</span><span class="c c7">107.67 MB</span><span class="c c8">/技术部/Synology Drive-1.1.4-10580[1].exe</span></div>
<div class="row"><span class="c c1">Window...</span><span class="c c2">2023/06/26 10:17:09</span><span class="c c3">192.168.58.3</span><span class="c c4">admin</span><span class="c c5">read</span><span class="c c6">文件</span><span class="c c7">48.11 MB</span><span class="c c8">/技术部/dotNetFx40_Full_x86_x64.exe</span></div>
<div class="row"><span class="c c1">Window...</span><span class="c c2">2023/06/26 10:17:04</span><span class="c c3">192.168.58.3</span><span class="c c4">admin</span><span class="c c5">create</span><span class="c c6">文件</span><span class="c c7">NA</span><span class="c c8">/技术部/vba_for_wps_2052.exe</span></div>
<div class="row hov"><span class="c c1">Window...</span><span class="c c2">2023/06/26 10:17:04</span><span class="c c3">192.168.58.3</span><span class="c c4">admin</span><span class="c c5">write</span><span class="c c6">文件</span><span class="c c7">22.50 MB</span><span class="c c8">/技术部/vba_for_wps_2052.exe</span></div>
<div class="row"><span class="c c1">Window...</span><span class="c c2">2023/06/26 10:17:02</span><span class="c c3">192.168.58.3</span><span class="c c4">admin</span><span class="c c5">create</span><span class="c c6">文件</span><span class="c c7">NA</span><span class="c c8">/技术部/visio2003注册码.txt</span></div>
</div>
<div id="gfoot" class="abs"></div>
<div class="abs" style="left:965px;top:973px;width:1px;height:22px;background:#d5dbe3"></div>
<div class="ft" style="left:967.500px;top:974.800px;color:#44546a">每页显示数</div>
<div class="abs" style="left:1038px;top:968px;width:79px;height:30px;border:1px solid #c9d2de;background:#fff"></div>
<div class="ft" style="left:1048.500px;top:975.800px;color:#3f5f86;font-size:13.400px">1000</div>
<svg width="14" height="8" viewBox="0 0 14 8" style="left:1095px;top:981px"><path d="M.5 .5h11.500l-5.750 6.200z" fill="#444c55"/></svg>
<div class="ft" style="left:1759.500px;top:972px;font-size:13.700px">39 个项目</div>
<div class="abs" style="left:1830px;top:974px;width:1px;height:21px;background:#d5dbe3"></div>
<svg width="20" height="20" viewBox="0 0 20 20" style="left:1843px;top:974px"><path d="M15.500 7.500A6.300 6.300 0 1 0 16 12.500" fill="none" stroke="#2e5f9c" stroke-width="2.500"/><path d="M17.500 2.500v6.500h-6.500z" fill="#2e5f9c"/></svg>
<div class="abs" style="left:0;top:997.500px;width:243px;height:13px;background:#fff"></div>
<div id="wtask" class="abs"></div>
<div class="tb" style="left:108.500px;width:159px"></div>
<div class="tb" style="left:270.500px;width:159px"></div>
<div class="tbt" style="left:162px">学识电脑工</div>
<div class="tbt" style="left:325px">192.168.58...</div>
<div id="clock" class="abs">上午 10:18</div>
<div id="ime" class="abs"></div>
<div class="abs" style="left:1110px;top:991px;width:16px;height:16px;border:1.500px solid #e0604f;border-top-width:3px;background:#fff;color:#111;font:bold 11px/11px 'Liberation Sans','Noto Sans CJK SC',sans-serif;text-align:center">五</div>
<div class="abs" style="left:1131px;top:991px;width:14px;height:16px;color:#222;font:bold 14px/16px 'Liberation Sans','Noto Sans CJK SC',sans-serif;text-align:center">中</div>
<svg width="1860" height="48" viewBox="0 985 1860 48" style="left:0;top:985px">
<defs>
<radialGradient id="orb" cx=".5" cy=".35" r=".7"><stop offset="0" stop-color="#9fc3ea"/><stop offset=".6" stop-color="#3d6fae"/><stop offset="1" stop-color="#1d3f72"/></radialGradient>
<g id="cat"><rect x="0" y="0" width="20" height="20" rx="5" fill="#3478f6"/><path d="M5 8l1.500-4 2.500 2.500h2l2.500-2.500 1.500 4v6h-10z" fill="#fff"/></g>
<g id="qq"><ellipse cx="0" cy="6" rx="6.300" ry="7" fill="#111"/><ellipse cx="0" cy="8.500" rx="3.500" ry="2" fill="#f5b921"/></g>
</defs>
<!-- IME icons -->
<path d="M1161 991.500q5.500 5 1 11-4 4.500-10 2.500 7-2.500 9-13.500z" fill="#333"/>
<circle cx="1174" cy="998" r="1.500" fill="none" stroke="#333" stroke-width="1"/><path d="M1181.300 996.600a1.300 1.300 0 1 1-.2 2.500q1.200.6.300 2.400" fill="#333" stroke="#333" stroke-width="1.200"/>
<rect x="1191.500" y="995.500" width="14.500" height="8.500" rx="1.200" fill="#444"/><path d="M1193.500 997.500h10.500M1193.500 999.700h10.500" stroke="#f2f2f2" stroke-width="1" stroke-dasharray="1.500 1"/><path d="M1195.500 1002h6.500" stroke="#f2f2f2" stroke-width="1"/>
<circle cx="1218" cy="994.800" r="2.700" fill="#333"/><path d="M1213 1005.500q0-7 5-7t5 7z" fill="#333"/>
<path d="M1232.500 1005l6.500-6.500" stroke="#333" stroke-width="2.600" stroke-linecap="round"/><path d="M1242.500 992a4 4 0 1 0 2.500 4l-3 1.200-1.700-1.700z" fill="#333"/>
<!-- start orb -->
<circle cx="-5" cy="1040" r="27" fill="url(#orb)" stroke="#2b3f5c" stroke-width="1.500"/>
<path d="M-4 1025q4-2 7 0v6q-3-2-7 0z" fill="#e8542c"/><path d="M4.500 1025.500q3-2 7 0v6q-4-2-7 0z" fill="#6cb83a"/>
<!-- folder -->
<path d="M55 1018q0-3 3-3h10l3 3h16q3 0 3 3v14h-35z" fill="#f1d98a" stroke="#c9a84f" stroke-width="1"/><path d="M54 1026q0-3 3-3h31q3 0 3 3v9h-37z" fill="#f7e8ad"/>
<rect x="59" y="1017" width="6" height="2.500" fill="#4aa94a"/><rect x="67" y="1019" width="6" height="2.500" fill="#d9382c"/><rect x="76" y="1020" width="6" height="2.500" fill="#2f7fd6"/>
<!-- 360 icon -->
<circle cx="137" cy="1040" r="17" fill="#fff" stroke="#55b92d" stroke-width="3.600"/><path d="M127 1036q6-16 25-20-9 5-12 14z" fill="#55b92d"/><path d="M130 1033l7-7 7 7z" fill="#55b92d"/>
<!-- monitor icon -->
<path d="M283 1015l31 4-2 17h-25z" fill="#c9d3e0"/><path d="M285.500 1016.500l26.500 3.500-2 15h-14z" fill="#1327d6"/><path d="M285.500 1016.500l9 1.200 4 17h-4z" fill="#0a1670"/><path d="M297 1018l14 1.800-1 9z" fill="#4b6cf0"/>
<!-- tray -->
<rect x="1243" y="1022" width="20" height="14" rx="3" fill="#3a9df8"/><text x="1246.500" y="1036" font-family="Liberation Sans,Noto Sans CJK SC,sans-serif" font-weight="bold" font-size="13" fill="#fff">五</text>
<circle cx="1291" cy="1036" r="10.500" fill="#2a6f9a" stroke="#dfe8ef" stroke-width="1.600"/><circle cx="1291" cy="1035" r="4" fill="none" stroke="#fff" stroke-width="1.600"/>
<rect x="1311" y="1025" width="20.500" height="14" rx="3.500" fill="#fff"/><path d="M1316 1033h5v-2h6v6h-11z" fill="#1fb5d9"/>
<use href="#cat" x="1341" y="1025"/><use href="#cat" x="1371" y="1025"/><use href="#cat" x="1401" y="1025"/><use href="#cat" x="1431" y="1025"/><use href="#cat" x="1461" y="1025"/>
<rect x="1492" y="1025" width="19" height="12" rx="2" fill="#3565c8"/><rect x="1494" y="1026.500" width="6" height="5" fill="#d9242c"/><rect x="1502" y="1026.500" width="7" height="5" fill="#2f3f9c"/><rect x="1496" y="1030" width="11" height="4" fill="#333"/>
<path d="M1523 1031l8-4 8 4v6h-16z" fill="#fff"/><path d="M1526 1032.500l5-2.500 5 2.500v4h-10z" fill="#2e9b5a"/><circle cx="1537.600" cy="1028" r="2.600" fill="#ee3340"/>
<use href="#qq" x="1560.700" y="1026"/><use href="#qq" x="1591" y="1026"/>
<rect x="1611" y="1025" width="20" height="14" rx="5" fill="#f0145f"/><path d="M1617 1030l9 5h-9z" fill="#fff"/>
<rect x="1647" y="1026.500" width="10" height="8" fill="#fff" stroke="#222" stroke-width="1.300"/><rect x="1643.500" y="1030" width="10" height="6" fill="#fff" stroke="#222" stroke-width="1.300"/>
<rect x="1672" y="1026" width="4" height="8" rx="1" fill="#fff" stroke="#444" stroke-width=".8"/><path d="M1677 1028.500h13v6" fill="#cfd7e0" stroke="#fff" stroke-width="1.600"/>
<path d="M1701.500 1031.500l7-6.500v9h-7z" fill="#fff" stroke="#555" stroke-width=".6"/><path d="M1714 1028l3.500 5" stroke="#d5dce5" stroke-width="1.300"/>
</svg>

</body>
</html>
